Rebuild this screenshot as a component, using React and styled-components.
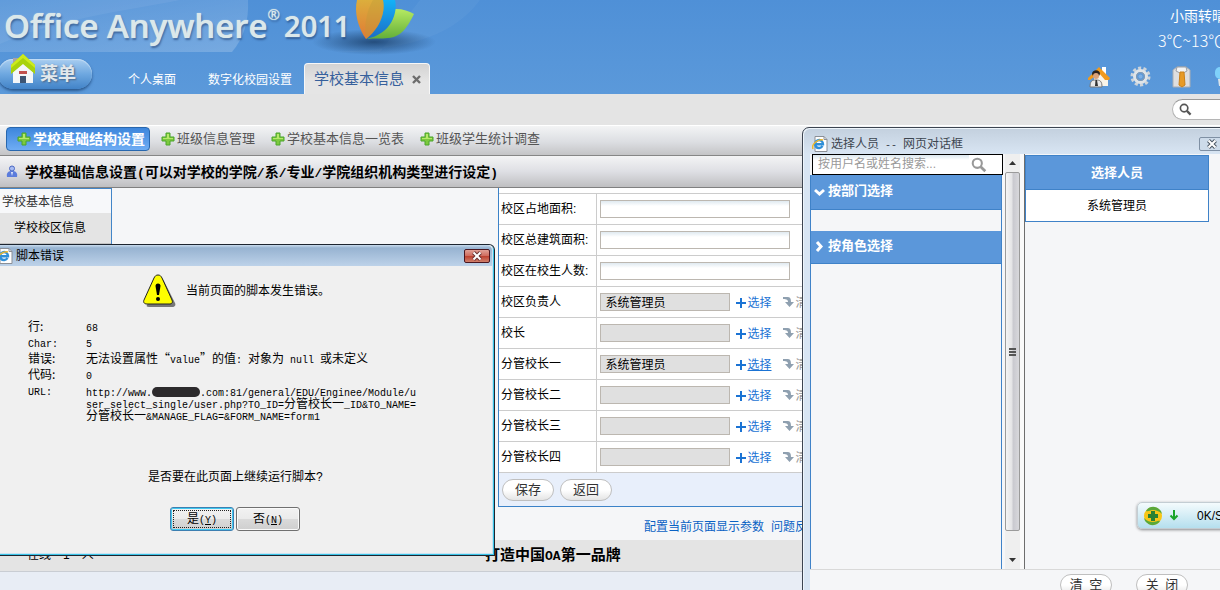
import React, { useState } from 'react';
import styled, { createGlobalStyle } from 'styled-components';

const GlobalStyle = createGlobalStyle`
  * {
    box-sizing: border-box;
  }
  body {
    margin: 0;
    overflow: hidden;
    background: #e8edf5;
    font-family: "Liberation Sans", "Noto Sans CJK SC", sans-serif;
    font-size: 12px;
    line-height: 16px;
    color: #000;
  }
  button, input {
    font-family: inherit;
    font-size: inherit;
    line-height: inherit;
    color: inherit;
    margin: 0;
  }
  a {
    text-decoration: none;
    color: inherit;
  }
`;

const Page = styled.div`
  display: flex;
  flex-direction: column;
  min-height: 100vh;
  overflow: hidden;
  white-space: nowrap;
`;

/* ---------- header ---------- */

const Header = styled.header`
  position: relative;
  display: flex;
  justify-content: space-between;
  height: 94px;
  background: linear-gradient(#4f90d7, #5b99da);
  overflow: hidden;
`;

const HeaderArt = styled.svg`
  position: absolute;
  left: 0;
  top: 0;
`;

const HeaderLeft = styled.div`
  position: relative;
  display: flex;
  flex-direction: column;
`;

const Brand = styled.h1`
  display: flex;
  align-items: center;
  height: 52px;
  margin: 0;
  padding-left: 4px;
  font-family: "Open Sans", "Liberation Sans", sans-serif;
  font-weight: 600;
  font-size: 33px;
  line-height: 52px;
  color: #dbe8ea;
  text-shadow: 0 0 1px #dbe8ea, 1px 2px 2px rgba(30, 60, 110, 0.6);
`;

const BrandYear = styled.span`
  margin-left: 4px;
  font-size: 29px;
`;

const Registered = styled.sup`
  align-self: flex-start;
  font-size: 15px;
  font-weight: 400;
  line-height: 28px;
`;

const Nav = styled.nav`
  display: flex;
  flex: 1;
`;

const MenuButton = styled.button`
  display: flex;
  align-items: center;
  gap: 5px;
  width: 94px;
  height: 30px;
  margin: 7px 32px 0 -2px;
  padding: 0 0 0 13px;
  border: 0;
  border-radius: 15px;
  background: linear-gradient(#a9cdf0, #6ea8e0 50%, #4283c8);
  box-shadow: inset 0 1px 1px #c5def5, 0 2px 3px rgba(20, 60, 110, 0.7);
  font-size: 18px;
  font-weight: bold;
  color: #e2e8ec;
  text-shadow: 1px 1px 2px #4a6585;

  svg {
    margin-top: -10px;
  }
`;

const NavLink = styled.a`
  padding: 20px 4px 0;
  margin-right: 24px;
  color: #fff;
`;

const ActiveTab = styled.div`
  display: flex;
  align-items: center;
  gap: 8px;
  height: 31px;
  margin-top: 11px;
  margin-left: -16px;
  padding: 0 8px 0 9px;
  border: 1px solid #f7f7f7;
  border-bottom: 0;
  border-radius: 4px 4px 0 0;
  background: linear-gradient(#d3d3d3, #e5e5e5 60%);
  font-size: 15px;
  color: #36609c;
`;

const TabClose = styled.button`
  display: flex;
  padding: 0;
  border: 0;
  background: none;
`;

const HeaderRight = styled.div`
  position: relative;
  width: 132px;
  flex: none;
`;

const Weather = styled.div`
  padding: 7px 0 0 70px;
  color: #fff;
  font-size: 14px;
  line-height: 18px;

  p {
    margin: 0 0 0 12px;
  }
  p + p {
    margin: 6px 0 0;
    font-family: "Noto Sans CJK SC", sans-serif;
    font-size: 16px;
    font-weight: 300;
  }
`;

const Shortcuts = styled.div`
  display: grid;
  grid-auto-flow: column;
  grid-auto-columns: 42px;
  justify-content: start;
  margin-top: 17px;
`;

const IconButton = styled.button`
  display: flex;
  padding: 0;
  border: 0;
  background: none;
`;

const SearchBar = styled.div`
  display: flex;
  justify-content: flex-end;
  height: 31px;
  padding-top: 5px;
  background: #e4e4e4;
`;

const SearchPill = styled.label`
  display: flex;
  align-items: center;
  width: 48px;
  height: 21px;
  padding-left: 6px;
  border: 1px solid #b5b5b5;
  border-top-color: #999;
  border-right: 0;
  border-radius: 11px 0 0 11px;
  background: #fff;

  input {
    width: 20px;
    border: 0;
    outline: 0;
    background: none;
  }
`;

/* ---------- bars above the form ---------- */

const Toolbar = styled.div`
  display: flex;
  align-items: flex-start;
  gap: 11px;
  height: 31px;
  padding: 1px 6px 0;
  border-top: 1px solid #fff;
  border-bottom: 1px solid #868686;
  background: linear-gradient(#f3f4f5, #dcdee2 55%, #c4c4c6);
`;

const ToolButton = styled.button`
  display: flex;
  align-items: center;
  gap: 2px;
  height: 24px;
  padding: ${(p) => (p.$active ? '0 4px 0 10px' : 0)};
  margin-right: ${(p) => (p.$active ? 0 : 5)}px;
  border: ${(p) => (p.$active ? '1px solid #2867ae' : '0')};
  border-radius: 4px;
  background: ${(p) => (p.$active ? 'linear-gradient(#3d86dc, #6fadf4)' : 'none')};
  font-size: ${(p) => (p.$active ? 14 : 13)}px;
  font-weight: ${(p) => (p.$active ? 'bold' : 'normal')};
  color: ${(p) => (p.$active ? '#fff' : '#555')};
`;

const TitleBar = styled.h2`
  display: flex;
  align-items: center;
  gap: 7px;
  height: 32px;
  margin: 0;
  padding-left: 6px;
  border-bottom: 1px solid #808080;
  background: linear-gradient(#f4f4f5, #dedfe4 50%, #bfbfc1);
  font-size: 14px;
`;

/* ---------- main area ---------- */

const Main = styled.main`
  display: grid;
  grid-template-columns: 498px 1fr;
  background: #f5f6f8;
`;

const SideMenu = styled.ul`
  align-self: start;
  width: 112px;
  margin: 0;
  padding: 0;
  list-style: none;
  border-top: 1px solid #4285c8;
  border-right: 1px solid #4285c8;
`;

const SideItem = styled.li`
  height: ${(p) => (p.$child ? 31 : 24)}px;
  padding-left: ${(p) => (p.$child ? 14 : 2)}px;
  border-bottom: ${(p) => (p.$child ? '1px solid #c4c4c4' : '0')};
  background: ${(p) => (p.$child ? '#e4e4e4' : '#f7f8fa')};
  color: ${(p) => (p.$child ? '#000' : '#333')};
  line-height: ${(p) => (p.$child ? 30 : 26)}px;
`;

const FormPanel = styled.form`
  border-left: 1px solid #3b82c8;
  border-bottom: 1px solid #3b82c8;
  background: #fff;
  padding-top: 5px;
`;

const FormTable = styled.table`
  width: 100%;
  border-collapse: collapse;

  tr {
    height: 31px;
    border-top: 1px solid #ccc;
  }
  tr:last-child {
    border-bottom: 1px solid #ccc;
  }
  th {
    width: 97px;
    padding: 0 0 0 2px;
    border-right: 1px solid #ccc;
    font-weight: normal;
    text-align: left;
  }
  td {
    padding: 0 0 0 3px;
  }
`;

const Field = styled.div`
  display: flex;
  align-items: center;
`;

const TextBox = styled.input`
  width: ${(p) => (p.readOnly ? 130 : 190)}px;
  height: 18px;
  padding: 0 5px 1px;
  border: 1px solid #bcb7b0;
  background: ${(p) => (p.readOnly ? '#e0e0e0' : 'linear-gradient(#dfe9f0, #fff 5px)')};
  outline: 0;
`;

const FieldLink = styled.a`
  display: flex;
  align-items: center;
  gap: 2px;
  margin-left: ${(p) => (p.$muted ? 11 : 6)}px;
  padding-top: 1px;
  color: ${(p) => (p.$muted ? '#999' : '#1b73d4')};

  span {
    text-decoration: ${(p) => (p.$underline ? 'underline' : 'none')};
  }
`;

const FormActions = styled.div`
  display: flex;
  gap: 6px;
  padding: 6px 3px 5px;
  background: #e8effb;
`;

const PillButton = styled.button`
  width: 52px;
  height: 22px;
  padding: 0;
  border: 1px solid #bfbfbf;
  border-radius: 11px;
  background: linear-gradient(#fff, #fff 50%, #e4e4e4);
  font-size: 13px;
  color: #333;
`;

const HelpLinks = styled.p`
  display: flex;
  gap: 7px;
  margin: 0;
  padding: 12px 0 5px 146px;
  color: #0a62c4;
`;

const Footer = styled.footer`
  display: grid;
  grid-template-columns: 458px 1fr;
  align-items: center;
  height: 32px;
  padding: 0 0 2px 27px;
  border-bottom: 1px solid #c9cdd3;
  background: #e4e4e4;

  strong {
    font-size: 15px;
  }
`;

/* ---------- script error window ---------- */

const ErrorWindow = styled.section`
  position: absolute;
  left: 0;
  top: 244px;
  width: 495px;
  border: 1px solid #1d2530;
  border-width: 1px 1px 1px 0;
  border-radius: 0 6px 0 0;
  background: #f0f0f0;
  box-shadow: inset -1px -1px 0 #39c3e6, inset -2px -2px 0 #c9e3f3;
  white-space: nowrap;
`;

const ErrorTitle = styled.header`
  display: flex;
  align-items: center;
  justify-content: space-between;
  height: 21px;
  margin-right: 2px;
  padding-right: 2px;
  border-radius: 0 5px 0 0;
  background: linear-gradient(#c9dcee, #97b3d1 3px, #bdd2e9);

  h3 {
    display: flex;
    align-items: center;
    gap: 3px;
    margin: 1px 0 0 -3px;
    font-size: 12px;
    font-weight: normal;
  }
`;

const WindowClose = styled.button`
  display: flex;
  align-items: center;
  justify-content: center;
  width: 26px;
  height: 14px;
  padding: 0;
  border: 1px solid ${(p) => (p.$red ? '#4a1620' : '#7f90a4')};
  border-radius: 2px;
  background: ${(p) => (p.$red ? 'linear-gradient(#e0a096, #cf6a5c 50%, #bc3f2e 51%, #d0806c)' : '#cddbea')};
`;

const ErrorMessage = styled.p`
  display: flex;
  align-items: center;
  gap: 10px;
  margin: 0;
  padding: 8px 0 0 143px;
`;

const ErrorDetails = styled.dl`
  display: grid;
  grid-template-columns: 58px 332px;
  margin: 0;
  padding: 10px 0 0 28px;
  font-family: "Noto Sans CJK SC", sans-serif;
  line-height: 16px;

  dt, dd {
    margin: 0;
  }
`;

const ErrorUrl = styled.dd`
  padding-top: 3px;
  line-height: 12px;
`;

const Redacted = styled.i`
  display: inline-block;
  width: 48px;
  height: 10px;
  border-radius: 5px;
  background: #2c2a2c;
  vertical-align: bottom;
`;

const ErrorQuestion = styled.p`
  margin: 0;
  padding: 48px 0 0 148px;
`;

const ErrorActions = styled.div`
  display: flex;
  gap: 2px;
  padding: 22px 0 24px 170px;
`;

const SystemButton = styled.button`
  width: 64px;
  height: 24px;
  padding: 2px;
  border: 1px solid ${(p) => (p.$focused ? '#3c7fb1' : '#707070')};
  border-radius: 3px;
  background: linear-gradient(#f2f2f2, #ebebeb 48%, #dadada 52%, #cfcfcf);
  box-shadow: ${(p) => (p.$focused ? 'inset 0 0 0 1px #3fc8f0' : 'inset 0 0 0 1px #fafafa')};

  > span {
    display: block;
    border: 1px dotted ${(p) => (p.$focused ? '#222' : 'transparent')};
  }
`;

/* ---------- person picker window ---------- */

const PickerWindow = styled.section`
  position: absolute;
  left: 802px;
  right: -14px;
  top: 127px;
  bottom: -14px;
  display: flex;
  flex-direction: column;
  padding-left: 7px;
  border: 1px solid #3c4450;
  border-radius: 7px 7px 0 0;
  background: linear-gradient(#c3d0de, #d8e5f3 26px);
  box-shadow: inset 1px 1px 0 #eef5fb;
  white-space: nowrap;
`;

const PickerTitle = styled.header`
  display: flex;
  justify-content: space-between;
  align-items: center;
  height: 26px;
  padding: 6px 8px 0 2px;

  h3 {
    display: flex;
    align-items: center;
    gap: 3px;
    margin: 0;
    font-size: 12px;
    font-weight: normal;
    color: #3d4650;
  }
`;

const PickerBody = styled.div`
  display: flex;
  flex: 1;
  min-height: 0;
  background: #f5f6f8;
`;

const PickerLeft = styled.div`
  display: flex;
  flex-direction: column;
  width: 195px;
`;

const PickerSearch = styled.label`
  display: flex;
  align-items: center;
  gap: 2px;
  height: 21px;
  margin-left: 2px;
  border: 1px solid #000;
  background: #fff;

  input {
    width: 156px;
    height: 19px;
    padding: 0 0 2px 5px;
    border: 0;
    outline: 0;
    background: linear-gradient(#d9e6ee, #fff 5px);
  }
  input::placeholder {
    color: #999;
    opacity: 1;
  }
`;

const Accordion = styled.div`
  flex: 1;
  margin-right: 1px;
  border-left: 1px solid #3f82c8;
  border-right: 1px solid #3f82c8;
`;

const AccordionHead = styled.button`
  display: flex;
  align-items: center;
  gap: 3px;
  width: 100%;
  height: ${(p) => (p.$open ? 35 : 33)}px;
  margin-top: ${(p) => (p.$open ? 0 : 21)}px;
  padding: 0 0 2px 3px;
  border: 0;
  border-bottom: 1px solid #3f82c8;
  background: #5b97da;
  font-size: 13px;
  font-weight: bold;
  color: #fff;
`;

const Scrollbar = styled.div`
  display: flex;
  flex-direction: column;
  align-items: center;
  width: 19px;
  margin-left: 2px;
  background: #efefef;
  border-right: 4px solid #fafafa;

  > svg {
    margin: 6px 0;
  }
`;

const ScrollThumb = styled.div`
  display: flex;
  flex: 1;
  align-items: center;
  justify-content: center;
  width: 15px;
  margin-bottom: 20px;
  border: 1px solid #9a9a9a;
  border-radius: 2px;
  background: linear-gradient(90deg, #f5f5f5, #e4e4e6 45%, #c9c9cf 55%, #d8d8dc);
`;

const PickerRight = styled.div`
  flex: 1;
  padding: 1px 24px 0 0;
  border-left: 1px solid #6e6e6e;
`;

const SelectedTable = styled.table`
  width: 184px;
  border-collapse: collapse;
  text-align: center;

  th {
    height: 34px;
    padding: 0;
    border: 1px solid #3f82c8;
    background: #5b97da;
    font-size: 13px;
    color: #fff;
  }
  td {
    height: 32px;
    padding: 0;
    border: 1px solid #3f82c8;
    background: #fff;
  }
`;

const PickerActions = styled.div`
  display: flex;
  gap: 24px;
  height: 34px;
  padding: 4px 0 0 250px;
  border-top: 1px solid #d9d9d9;
  background: #f5f6f8;
`;

const SpeedWidget = styled.div`
  position: absolute;
  right: -10px;
  top: 502px;
  display: flex;
  align-items: center;
  width: 93px;
  height: 27px;
  padding-left: 5px;
  border: 1px solid #c3cdd3;
  border-radius: 5px;
  background: linear-gradient(#f4fbfd, #b5dfee);
  box-shadow: 0 1px 3px rgba(0, 0, 0, 0.45);

  svg + svg {
    margin: 0 18px 0 6px;
  }
`;

const Latin = styled.span`
  font-family: "Liberation Mono", monospace;
  font-size: ${(p) => p.$size}px;
  line-height: 0;
`;

// sets the ASCII runs of a string in a half-width face
const Mixed = ({ text, size = 10 }) =>
  text.split(/([\x20-\x7e]+)/).map((part, i) =>
    i % 2 ? <Latin key={i} $size={size}>{part}</Latin> : part
  );

/* ---------- drawings ---------- */

const PlusIcon = () => (
  <svg width="14" height="14" viewBox="0 0 14 14">
    <path d="M5 1h4v4h4v4H9v4H5V9H1V5h4z" fill="#7cc93f" stroke="#4aa52a" />
    <path d="M6 2h2v4h4v1H2V6h4z" fill="#b6e86a" />
  </svg>
);

const IeIcon = () => (
  <svg width="16" height="16" viewBox="0 0 16 16">
    <path d="M3 0.500h9l3 3v12H3z" fill="#fff" stroke="#8b8f96" />
    <path d="M12 0.500v3h3" fill="none" stroke="#8b8f96" />
    <path d="M10.500 10A4 4 0 1 1 11 8.200H4" fill="none" stroke="#2f8fd8" strokeWidth="2.400" />
    <path d="M1 13C-1 8 6 3 11 4" fill="none" stroke="#f0b92c" strokeWidth="1.500" />
  </svg>
);

const CrossIcon = ({ edge = '#6b3434' }) => (
  <svg width="12" height="10" viewBox="0 0 12 10">
    <path d="M2.500 1.500l7 7M9.500 1.500l-7 7" stroke={edge} strokeWidth="4" />
    <path d="M2.500 1.500l7 7M9.500 1.500l-7 7" stroke="#fff" strokeWidth="2" />
  </svg>
);

const Magnifier = ({ size, color }) => (
  <svg width={size} height={size} viewBox="0 0 14 14" fill="none" stroke={color}>
    <circle cx="5.500" cy="5.500" r="4" strokeWidth="1.800" />
    <path d="M8.500 8.500l4 4" strokeWidth="2.400" />
  </svg>
);

const HouseIcon = () => (
  <svg width="24" height="31" viewBox="0 0 24 31">
    <path d="M2 4h6v9H2z" fill="#a9a3a8" />
    <path d="M2 18L12 9l10 9v11H2z" fill="#f4f6f8" />
    <path d="M12 0l12 11v9L12 10 0 20v-9z" fill="#a9d20c" />
    <path d="M12 0l12 11v3L12 4 0 14v-3z" fill="#cdeb1c" />
    <path d="M8 17h8v3H8z" fill="#c2504d" />
    <path d="M9 22h6v7H9z" fill="#3d5574" />
  </svg>
);

const HeaderDecoration = () => (
  <HeaderArt width="480" height="94" viewBox="0 0 480 94">
    <defs>
      <linearGradient id="glow" x1="0" y1="0" x2="1" y2="1">
        <stop offset="0" stopColor="#fff" stopOpacity="0.050" />
        <stop offset="1" stopColor="#fff" stopOpacity="0.200" />
      </linearGradient>
      <radialGradient id="shade">
        <stop offset="0" stopColor="#14365f" stopOpacity="0.750" />
        <stop offset="1" stopColor="#14365f" stopOpacity="0" />
      </radialGradient>
      <linearGradient id="orange" x1="0" y1="0" x2="0" y2="1">
        <stop offset="0" stopColor="#dcae3c" />
        <stop offset="1" stopColor="#e07a35" />
      </linearGradient>
      <linearGradient id="blue" x1="0" y1="0" x2="0" y2="1">
        <stop offset="0" stopColor="#12b2f8" />
        <stop offset="1" stopColor="#1e6cc4" />
      </linearGradient>
      <linearGradient id="green" x1="0" y1="0" x2="0" y2="1">
        <stop offset="0" stopColor="#b6ea62" />
        <stop offset="1" stopColor="#62ae38" />
      </linearGradient>
    </defs>
    <path d="M0 0H248C249 20 244 38 232 52H0z" fill="url(#glow)" />
    <path d="M0 0H180C120 12 60 18 0 44z" fill="#fff" opacity="0.060" />
    <path d="M330 52C400 50 450 40 480 0H420L380 52z" fill="#fff" opacity="0.040" />
    <ellipse cx="374" cy="42" rx="62" ry="13" fill="url(#shade)" />
    <path d="M367 39C385 28 384 10 396 9c7 0 13 2 18 5C408 26 402 37 388 38c-7 1-13 0-21 1z" fill="url(#green)" />
    <path d="M366 39C376 30 378 12 380 0h15c3 12-3 34-29 39z" fill="url(#blue)" />
    <path d="M366 39C358 28 354 12 357 0h26c3 14-5 30-17 39z" fill="url(#orange)" />
    <path d="M366 39C364 26 366 12 373 0h10c3 14-5 30-17 39z" fill="#b99a3a" opacity="0.350" />
  </HeaderArt>
);

const HomeUserIcon = () => (
  <svg width="23" height="22" viewBox="0 0 23 22">
    <path d="M14 1h4v8h-4z" fill="#fff" />
    <path d="M6 11l6-7 8 7v9H6z" fill="#f8f4ea" />
    <path d="M0 12L11 1l11 11-1 2h-4l-6-7-9 7H0z" fill="#ef9a1e" />
    <path d="M4 8c0-5 8-5 8 0l-1 2H5z" fill="#2b211c" />
    <circle cx="8" cy="10" r="3" fill="#dba37a" />
    <path d="M2 21c0-6 2-7 6-7s6 1 6 7z" fill="#e9e9ea" stroke="#777" />
    <path d="M7.500 14h1.500l1 6H7z" fill="#333" />
  </svg>
);

const GearIcon = () => (
  <svg width="21" height="21" viewBox="0 0 21 21">
    <circle cx="10.500" cy="10.500" r="8.500" fill="none" stroke="#cdd4da" strokeWidth="3" strokeDasharray="3.100 2.240" />
    <circle cx="10.500" cy="10.500" r="6" fill="none" stroke="#dfe4e8" strokeWidth="3" />
    <circle cx="10.500" cy="10.500" r="4" fill="#5b99da" stroke="#8d9bab" />
    <circle cx="10.500" cy="10.500" r="2" fill="#7fb0e4" />
  </svg>
);

const ShirtIcon = () => (
  <svg width="19" height="22" viewBox="0 0 19 22">
    <path d="M1 4l4-3h9l4 3v17H1z" fill="#dededf" stroke="#a9adb3" />
    <path d="M5 1h9l1 4-4 2H8L4 5z" fill="#f4f4f4" stroke="#9a9fa6" />
    <path d="M8 6h4l1 13-3 2-3-2z" fill="#e79a26" stroke="#c9801a" />
  </svg>
);

const BlueIcon = () => (
  <svg width="20" height="22" viewBox="0 0 20 22">
    <rect x="1" y="1" width="18" height="12" rx="5" fill="#7fd1fa" />
    <path d="M4 13h8l-2 7H5z" fill="#d9e3ea" />
  </svg>
);

const UserIcon = () => (
  <svg width="12" height="13" viewBox="0 0 12 13">
    <path d="M1 12c-1-5 2-6 5-6s6 1 5 6z" fill="#5b7cdc" />
    <circle cx="6" cy="3.500" r="2.500" fill="#a9bcf2" stroke="#4a68c4" />
    <path d="M5 7h2l-1 4z" fill="#e8eefc" />
  </svg>
);

const BluePlus = () => (
  <svg width="10" height="10" viewBox="0 0 10 10">
    <path d="M4 0h2v4h4v2H6v4H4V6H0V4h4z" fill="#1b73d4" />
  </svg>
);

const ClearArrow = () => (
  <svg width="11" height="11" viewBox="0 0 11 11">
    <path d="M0 0h4c3 0 4 1 4 5h3L6.500 10 2 5h3c0-2-1-3-5-3z" fill="#8fa0b0" />
  </svg>
);

const WarningIcon = () => (
  <svg width="33" height="34" viewBox="0 0 33 34">
    <path d="M16 3c2 0 3 1 4 3l11 22c1 2 0 4-3 4H5c-2 0-3-1-2-2z" fill="#777" transform="translate(1 1)" />
    <path d="M15 1c2 0 3 1 4 3l10 22c1 2 0 4-2 4H4c-3 0-4-2-3-4L11 4c1-2 2-3 4-3z" fill="#ff0" stroke="#222" />
    <path d="M12.500 12a2.500 2.500 0 0 1 5 0l-1.500 9h-2z" fill="#000" />
    <circle cx="15" cy="25" r="2" fill="#000" />
  </svg>
);

const Chevron = ({ open }) => (
  <svg width="11" height="11" viewBox="0 0 11 11" fill="none" stroke="#fff" strokeWidth="3">
    <path d={open ? 'M1 4l4.500 4L10 4' : 'M3 1l4 4.500L3 10'} />
  </svg>
);

const ScrollArrow = ({ down }) => (
  <svg width="7" height="6" viewBox="0 0 7 6">
    <path d={down ? 'M0 1h7L3.500 5z' : 'M0 5h7L3.500 1z'} fill="#333" />
  </svg>
);

const Grip = () => (
  <svg width="7" height="8" viewBox="0 0 7 8">
    <path d="M0 1h7M0 4h7M0 7h7" stroke="#555" strokeWidth="2" />
  </svg>
);

const ShieldIcon = () => (
  <svg width="20" height="20" viewBox="0 0 20 20">
    <circle cx="10" cy="10" r="9" fill="#f8c616" />
    <path d="M3 5C6 0 13-1 18 5l1 3c-3-3-6-4-9-4-3 0-5 2-7 1zM17 15c-3 5-10 6-15 0l-1-3c3 3 6 4 9 4 3 0 5-2 7-1z" fill="#5aa83a" />
    <path d="M8 5h4v3h3v4h-3v3H8v-3H5V8h3z" fill="#2b8132" />
  </svg>
);

const DownArrow = () => (
  <svg width="10" height="11" viewBox="0 0 10 11">
    <path d="M5 0v9M1.500 5.500L5 9l3.500-3.500" fill="none" stroke="#18a52a" strokeWidth="2" />
  </svg>
);

const tools = ['学校基础结构设置', '班级信息管理', '学校基本信息一览表', '班级学生统计调查'];

const textFields = ['校区占地面积:', '校区总建筑面积:', '校区在校生人数:'];

const personFields = [
  { label: '校区负责人', value: '系统管理员' },
  { label: '校长', value: '' },
  { label: '分管校长一', value: '系统管理员', underline: true },
  { label: '分管校长二', value: '' },
  { label: '分管校长三', value: '' },
  { label: '分管校长四', value: '' },
];

const TopHeader = () => (
  <Header>
    <HeaderDecoration />
    <HeaderLeft>
      <Brand>
        Office Anywhere
        <Registered>®</Registered>
        <BrandYear>2011</BrandYear>
      </Brand>
      <Nav>
        <MenuButton type="button">
          <HouseIcon />
          菜单
        </MenuButton>
        <NavLink href="#desktop">个人桌面</NavLink>
        <NavLink href="#campus">数字化校园设置</NavLink>
        <ActiveTab>
          学校基本信息
          <TabClose type="button" aria-label="关闭标签">
            <svg width="9" height="9" viewBox="0 0 9 9">
              <path d="M1 1l7 7M8 1L1 8" stroke="#6d6d6d" strokeWidth="2.400" />
            </svg>
          </TabClose>
        </ActiveTab>
      </Nav>
    </HeaderLeft>
    <HeaderRight>
      <Weather>
        <p>小雨转晴</p>
        <p>3℃~13℃</p>
      </Weather>
      <Shortcuts>
        <IconButton type="button" aria-label="主页"><HomeUserIcon /></IconButton>
        <IconButton type="button" aria-label="设置"><GearIcon /></IconButton>
        <IconButton type="button" aria-label="主题"><ShirtIcon /></IconButton>
        <IconButton type="button" aria-label="消息"><BlueIcon /></IconButton>
      </Shortcuts>
    </HeaderRight>
  </Header>
);

const SchoolForm = () => {
  const [values, setValues] = useState({});

  return (
    <FormPanel onSubmit={(e) => e.preventDefault()}>
      <FormTable>
        <tbody>
          {textFields.map((label, i) => (
            <tr key={label}>
              <th scope="row"><label htmlFor={`text-${i}`}>{label}</label></th>
              <td>
                <Field>
                  <TextBox
                    id={`text-${i}`}
                    value={values[label] || ''}
                    onChange={(e) => setValues({ ...values, [label]: e.target.value })}
                  />
                </Field>
              </td>
            </tr>
          ))}
          {personFields.map(({ label, value, underline }, i) => (
            <tr key={label}>
              <th scope="row"><label htmlFor={`person-${i}`}>{label}</label></th>
              <td>
                <Field>
                  <TextBox id={`person-${i}`} readOnly value={value} />
                  <FieldLink href="#select" $underline={underline}>
                    <BluePlus />
                    <span>选择</span>
                  </FieldLink>
                  <FieldLink href="#clear" $muted>
                    <ClearArrow />
                    <span>清空</span>
                  </FieldLink>
                </Field>
              </td>
            </tr>
          ))}
        </tbody>
      </FormTable>
      <FormActions>
        <PillButton type="submit">保存</PillButton>
        <PillButton type="button">返回</PillButton>
      </FormActions>
    </FormPanel>
  );
};

const ScriptError = () => (
  <ErrorWindow role="dialog" aria-label="脚本错误">
    <ErrorTitle>
      <h3><IeIcon />脚本错误</h3>
      <WindowClose type="button" $red aria-label="关闭"><CrossIcon /></WindowClose>
    </ErrorTitle>
    <ErrorMessage>
      <WarningIcon />
      当前页面的脚本发生错误。
    </ErrorMessage>
    <ErrorDetails>
      <dt>行:</dt>
      <dd><Mixed text="68" /></dd>
      <dt><Mixed text="Char:" /></dt>
      <dd><Mixed text="5" /></dd>
      <dt>错误:</dt>
      <dd><Mixed text="无法设置属性“value”的值: 对象为 null 或未定义" /></dd>
      <dt>代码:</dt>
      <dd><Mixed text="0" /></dd>
      <dt><Mixed text="URL:" /></dt>
      <ErrorUrl>
        <Mixed text="http://www." />
        <Redacted />
        <Mixed text=".com:81/general/EDU/Enginee/Module/u" />
        <br />
        <Mixed text="ser_select_single/user.php?TO_ID=分管校长一_ID&TO_NAME=" />
        <br />
        <Mixed text="分管校长一&MANAGE_FLAG=&FORM_NAME=form1" />
      </ErrorUrl>
    </ErrorDetails>
    <ErrorQuestion>是否要在此页面上继续运行脚本?</ErrorQuestion>
    <ErrorActions>
      <SystemButton type="button" $focused>
        <span>是<Latin $size={10}>(<u>Y</u>)</Latin></span>
      </SystemButton>
      <SystemButton type="button">
        <span>否<Latin $size={10}>(<u>N</u>)</Latin></span>
      </SystemButton>
    </ErrorActions>
  </ErrorWindow>
);

const PersonPicker = () => {
  const [keyword, setKeyword] = useState('');

  return (
    <PickerWindow role="dialog" aria-label="选择人员">
      <PickerTitle>
        <h3><IeIcon /><span><Mixed text="选择人员 -- 网页对话框" /></span></h3>
        <WindowClose type="button" aria-label="关闭"><CrossIcon edge="#4b5663" /></WindowClose>
      </PickerTitle>
      <PickerBody>
        <PickerLeft>
          <PickerSearch>
            <input
              aria-label="搜索"
              placeholder="按用户名或姓名搜索..."
              value={keyword}
              onChange={(e) => setKeyword(e.target.value)}
            />
            <Magnifier size={16} color="#999" />
          </PickerSearch>
          <Accordion>
            <AccordionHead type="button" $open><Chevron open />按部门选择</AccordionHead>
            <AccordionHead type="button"><Chevron />按角色选择</AccordionHead>
          </Accordion>
        </PickerLeft>
        <Scrollbar>
          <ScrollArrow />
          <ScrollThumb><Grip /></ScrollThumb>
          <ScrollArrow down />
        </Scrollbar>
        <PickerRight>
          <SelectedTable>
            <thead>
              <tr><th scope="col">选择人员</th></tr>
            </thead>
            <tbody>
              <tr><td>系统管理员</td></tr>
            </tbody>
          </SelectedTable>
        </PickerRight>
      </PickerBody>
      <PickerActions>
        <PillButton type="button">清&ensp;空</PillButton>
        <PillButton type="button">关&ensp;闭</PillButton>
      </PickerActions>
    </PickerWindow>
  );
};

const App = () => (
  <Page>
    <GlobalStyle />
    <TopHeader />
    <SearchBar>
      <SearchPill>
        <Magnifier size={13} color="#555" />
        <input aria-label="全局搜索" />
      </SearchPill>
    </SearchBar>
    <Toolbar>
      {tools.map((name, i) => (
        <ToolButton key={name} type="button" $active={i === 0}>
          <PlusIcon />
          {name}
        </ToolButton>
      ))}
    </Toolbar>
    <TitleBar>
      <UserIcon />
      <span><Mixed text="学校基础信息设置(可以对学校的学院/系/专业/学院组织机构类型进行设定)" size={13} /></span>
    </TitleBar>
    <Main>
      <SideMenu>
        <SideItem>学校基本信息</SideItem>
        <SideItem $child>学校校区信息</SideItem>
      </SideMenu>
      <div>
        <SchoolForm />
        <HelpLinks>
          <a href="#config">配置当前页面显示参数</a>
          <a href="#feedback">问题反馈</a>
        </HelpLinks>
      </div>
    </Main>
    <Footer>
      <span>在线&emsp;1&emsp;人</span>
      <strong><Mixed text="打造中国OA第一品牌" size={13} /></strong>
    </Footer>
    <ScriptError />
    <PersonPicker />
    <SpeedWidget>
      <ShieldIcon />
      <DownArrow />
      0K/S
    </SpeedWidget>
  </Page>
);

export default App;
